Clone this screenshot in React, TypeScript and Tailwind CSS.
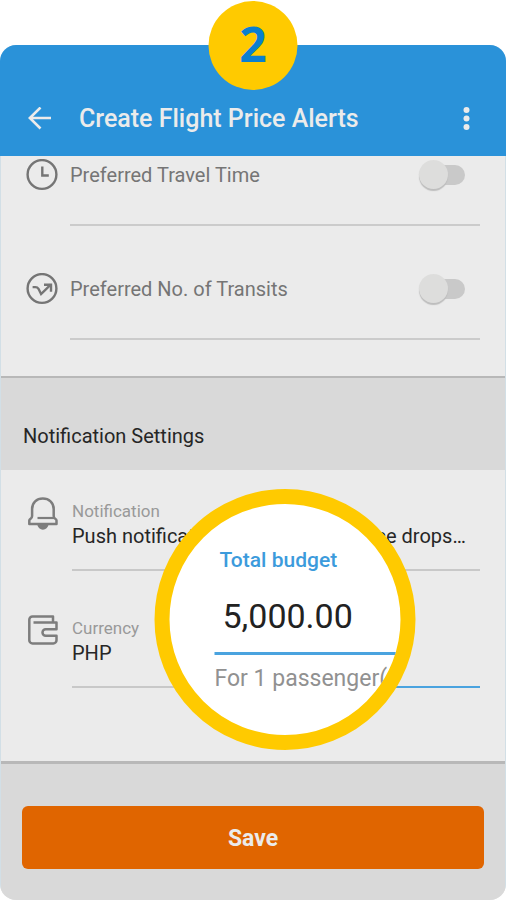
import type { ReactNode } from "react"

function ClockIcon() {
  return (
    <svg viewBox="0 0 32 32" className="size-8" fill="none" stroke="currentColor" strokeWidth="2.4" aria-hidden="true">
      <circle cx="16" cy="15.5" r="14.4" />
      <path d="M16.3 7.500v9h6.500" />
    </svg>
  )
}

function TransitIcon() {
  return (
    <svg viewBox="0 0 32 32" className="size-8" fill="none" stroke="currentColor" strokeWidth="2.4" aria-hidden="true">
      <circle cx="16" cy="15.500" r="14.4" />
      <path d="M6.6 14.1h2.900c1.400 0 2.300.6 3 1.700l2.600 5.200 9.600-9.300" />
      <path d="M18 11.700h7v7" />
    </svg>
  )
}

function BellIcon() {
  return (
    <svg viewBox="0 0 30 33" className="h-[33px] w-[30px]" fill="none" stroke="currentColor" strokeWidth="2.500" strokeLinejoin="round" aria-hidden="true">
      <path d="M1.300 27v-3.500c0-.8.500-1.300 1.200-1.700 1-.6 1.600-1.500 1.600-2.800v-7C4.100 5.500 8.700 1.500 14.800 1.500S25.700 5.500 25.700 12v7c0 1.300.5 2.200 1.500 2.800.8.500 1.300.9 1.300 1.700V27z" />
      <path d="M9.500 21h17" strokeWidth="2.200" />
      <path d="M9.200 27.500h11.400c-.6 3.100-2.900 5.200-5.700 5.200s-5.100-2.100-5.700-5.200z" fill="currentColor" stroke="none" />
    </svg>
  )
}

function WalletIcon() {
  return (
    <svg viewBox="0 0 30 30" className="size-[30px]" fill="none" stroke="currentColor" strokeWidth="2.500" strokeLinejoin="round" aria-hidden="true">
      <path d="M25 7.500v-6H4.500a3.200 3.200 0 0 0-3.200 3.200v20.500a3.200 3.200 0 0 0 3.200 3.200h20.800a3.200 3.200 0 0 0 3.200-3.200v-4.500H17.700a3.200 3.200 0 0 1 0-6.400h10.800V7.500H5.500" />
    </svg>
  )
}

function ToggleRow({ id, icon, label }: { id: string; icon: ReactNode; label: string }) {
  return (
    <li className="flex gap-3 text-[#757575]">
      {icon}
      <div className="flex h-[67px] flex-1 items-start justify-between border-b-2 border-[#cbcbcb]">
        <label htmlFor={id} className="text-xl leading-8">{label}</label>
        <input
          id={id}
          type="checkbox"
          role="switch"
          className="relative mr-[15px] h-8 w-[46px] appearance-none before:absolute before:right-0 before:top-1.5 before:h-5 before:w-9 before:rounded-full before:bg-[#c9c9c9] after:absolute after:left-0 after:top-px after:size-[29px] after:rounded-full after:bg-[#dddddc] after:shadow-[0_2px_1px_#bdbdbd]"
        />
      </div>
    </li>
  )
}

export default function App() {
  return (
    <main className="relative bg-white pt-[45px] font-[Roboto,sans-serif]">
      <div className="absolute left-1/2 top-px flex size-[89px] -translate-x-1/2 items-center justify-center rounded-full bg-[#ffca00] pb-1 font-['Open_Sans',sans-serif] text-5xl font-bold text-[#0a7fd0]">
        2
      </div>

      <div className="overflow-hidden rounded-2xl bg-[#ebebeb]">
        <header className="flex h-[111px] items-center gap-[27px] bg-[#2a92d9] px-6 pt-9 text-[#ebebeb]">
          <button type="button" aria-label="Back" className="pl-1">
            <svg viewBox="0 0 24 24" className="size-6" fill="none" stroke="currentColor" strokeWidth="2.600" aria-hidden="true">
              <path d="M12.500.5 1.800 11 12.500 21.500M1.800 11H23" />
            </svg>
          </button>
          <h1 className="flex-1 whitespace-nowrap text-[25px] font-medium">Create Flight Price Alerts</h1>
          <button type="button" aria-label="More options" className="pr-1">
            <svg viewBox="0 0 24 24" className="size-6" fill="currentColor" aria-hidden="true">
              <circle cx="12.500" cy="3" r="3" />
              <circle cx="12.500" cy="11.500" r="3" />
              <circle cx="12.500" cy="20" r="3" />
            </svg>
          </button>
        </header>

        <div className="border-x border-[#d2dfe6]">
          <ul className="flex flex-col gap-[47px] px-[25px] pb-9 pt-[3px]">
            <ToggleRow id="travel-time" icon={<ClockIcon />} label="Preferred Travel Time" />
            <ToggleRow id="transits" icon={<TransitIcon />} label="Preferred No. of Transits" />
          </ul>

          <h2 className="border-t-2 border-[#b8b8b8] bg-[#d9d9d9] px-[22px] pb-5 pt-11 text-xl text-[#262626]">
            Notification Settings
          </h2>

          <section className="relative pb-[73px] pl-[27px] pr-[25px] pt-[27px]">
            <div className="flex gap-3.5">
              <div className="text-[#7d7d7d]"><BellIcon /></div>
              <div className="h-[74px] min-w-0 flex-1 border-b-2 border-[#c8c8c8] pt-1">
                <p className="text-[17px] leading-5 text-[#999]">Notification</p>
                <p className="truncate text-xl leading-[30px] text-[#262626]">Push notifications when airfare price drops…</p>
              </div>
            </div>

            <div className="mt-11 flex gap-3.5">
              <div className="text-[#7d7d7d]"><WalletIcon /></div>
              <div className="h-[73px] flex-1 border-b-2 border-[#c8c8c8] pt-[3px]">
                <p className="text-[17px] leading-5 text-[#999]">Currency</p>
                <p className="text-xl leading-[30px] text-[#262626]">PHP</p>
              </div>
              <div className="flex-1 border-b-2 border-[#4aa3df]" />
            </div>

            {/* magnified budget field */}
            <div className="absolute left-1/2 top-[19px] ml-8 size-[261px] -translate-x-1/2 overflow-hidden rounded-full border-[15px] border-[#ffca00] bg-white pl-[45px] pt-10">
              <label htmlFor="budget" className="block pl-[5px] text-[21px] font-medium leading-8 text-[#3c9bdc]">Total budget</label>
              <input
                id="budget"
                type="text"
                inputMode="decimal"
                defaultValue="5,000.00"
                className="block h-[79px] w-full border-b-[3px] border-[#4aa3df] bg-transparent pl-2 pt-1 text-[34px] text-[#222] outline-none"
              />
              <p className="whitespace-nowrap pt-2 text-[23px] leading-8 text-[#919191]">For 1 passenger(s)</p>
            </div>
          </section>

          <footer className="border-t-[3px] border-[#b8b8b8] bg-[#d9d9d9] px-[21px] pb-[31px] pt-[42px]">
            <button type="button" className="h-[63px] w-full rounded-md bg-[#e06500] pt-1 text-[23px] font-bold text-[#ebebeb]">Save</button>
          </footer>
        </div>
      </div>
    </main>
  )
}
